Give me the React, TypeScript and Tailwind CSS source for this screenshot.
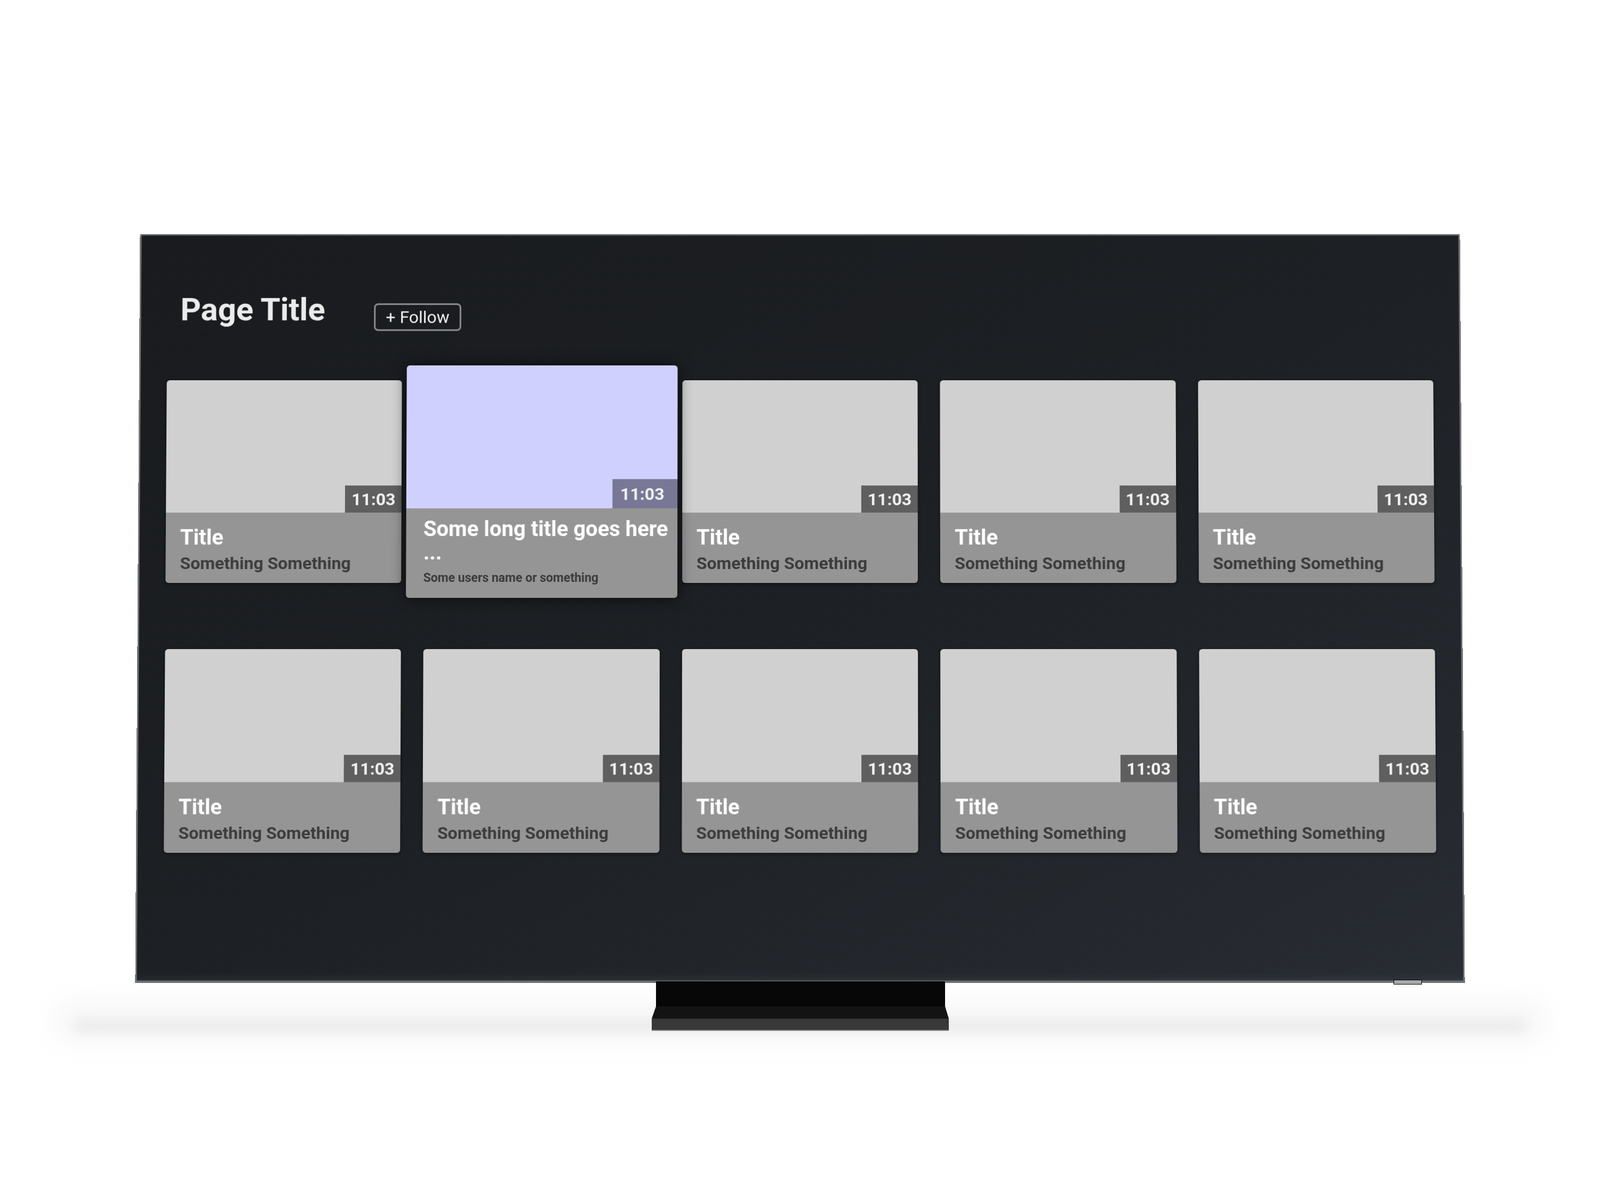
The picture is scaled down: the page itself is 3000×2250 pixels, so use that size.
import type { ReactNode } from 'react';

type Video = {
    title: string;
    subtitle: string;
    duration: string;
};

const videos: Video[] = Array.from({ length: 10 }, () => ({
    title: 'Title',
    subtitle: 'Something Something',
    duration: '11:03',
}));

const FOCUSED = 1;

function VideoCard({ video }: { video: Video }) {
    return (
        <div className="flex h-[381px] flex-col overflow-hidden rounded-[6px] shadow-[0_2px_6px_rgba(0,0,0,0.45)]">
            <div className="flex h-[249px] shrink-0 items-end justify-end bg-[#d0d0d0]">
                <span className="flex h-[51px] w-[106px] items-center justify-center bg-[#5f5f5f] text-[32px] font-bold text-[#f2f2f2]">
                    {video.duration}
                </span>
            </div>
            <div className="flex flex-1 flex-col bg-[#959595] px-[27px] pt-[25px]">
                <p className="text-[40px] leading-[44px] font-bold text-white">
                    {video.title}
                </p>
                <p className="mt-[7px] text-[32px] leading-[38px] font-bold whitespace-nowrap text-[#3c3c3c]">
                    {video.subtitle}
                </p>
            </div>
        </div>
    );
}

function FocusedCard({ video }: { video: Video }) {
    return (
        <div className="relative z-10 -mx-[33px] -my-[28px] flex h-[437px] flex-col overflow-hidden rounded-[6px] shadow-[0_0_26px_rgba(0,0,0,0.65)]">
            <div className="flex h-[269px] shrink-0 items-end justify-end bg-[#d0d0ff]">
                <span className="flex h-[55px] w-[122px] items-center bg-[#787896] pl-[15px] text-[32px] font-bold text-[#f2f2f2]">
                    {video.duration}
                </span>
            </div>
            <div className="flex flex-1 flex-col bg-[#959595] pt-[17px] pl-[32px]">
                <p className="text-[40px] leading-[44px] font-bold whitespace-nowrap text-white">
                    Some long title goes here
                </p>
                <p className="text-[40px] leading-[44px] font-bold text-white">
                    ...
                </p>
                <p className="mt-[12px] text-[23px] leading-[28px] font-bold whitespace-nowrap text-[#3a3a3a]">
                    Some users name or something
                </p>
            </div>
        </div>
    );
}

function Screen({ children }: { children: ReactNode }) {
    return (
        <div className="h-[1404px] w-[2484px] border-x-[3px] border-t-[3px] border-b-[4px] border-x-[#747474] border-t-[#707070] border-b-[#666666] bg-linear-to-br from-[#191b1e] via-[#1d2024] to-[#282c33] [transform:perspective(3000px)_rotateX(0.9deg)]">
            {children}
        </div>
    );
}

function Stand() {
    return (
        <svg width="557" height="93" viewBox="0 0 557 93" className="relative">
            <rect x="8" y="0" width="542" height="48" fill="#070707" />
            <polygon points="8,47 550,47 557,70 0,70" fill="#131313" />
            <rect x="0" y="70" width="557" height="21" fill="#383838" />
            <rect x="0" y="91" width="557" height="2" fill="#8a8a8a" />
        </svg>
    );
}

export default function App() {
    return (
        <div className="flex h-[2250px] w-[3000px] flex-col items-center bg-white pt-[436px] font-['Roboto',_sans-serif]">
            <div className="relative w-[2484px]">
                <Screen>
                    <div className="flex flex-col px-[49px] pt-[104px]">
                        <div className="flex items-start pl-[25px]">
                            <h1 className="text-[60px] leading-[72px] font-bold text-[#ebebeb]">
                                Page Title
                            </h1>
                            <button className="mt-[24px] ml-[92px] flex h-[52px] w-[164px] items-center justify-center rounded-[8px] border-[3px] border-[#8e8e8e] text-[32px] text-[#f0f0f0]">
                                + Follow
                            </button>
                        </div>
                        <div className="mt-[93px] grid grid-cols-5 gap-x-[42px] gap-y-[124px]">
                            {videos.map((video, i) =>
                                i === FOCUSED ? (
                                    <FocusedCard key={i} video={video} />
                                ) : (
                                    <VideoCard key={i} video={video} />
                                ),
                            )}
                        </div>
                    </div>
                </Screen>
                <div className="relative flex h-[120px] justify-center">
                    <div className="absolute top-[36px] right-[-160px] left-[-160px] h-[80px] rounded-full bg-[#f7f7f7] blur-[24px]" />
                    <div className="absolute top-[74px] right-[-120px] left-[-120px] h-[18px] rounded-full bg-[#e6e6e6] blur-[12px]" />
                    <Stand />
                    <div className="absolute top-[-3px] right-[76px] h-[9px] w-[53px] border-[1.5px] border-black bg-[#a9a9a9]" />
                </div>
            </div>
        </div>
    );
}
